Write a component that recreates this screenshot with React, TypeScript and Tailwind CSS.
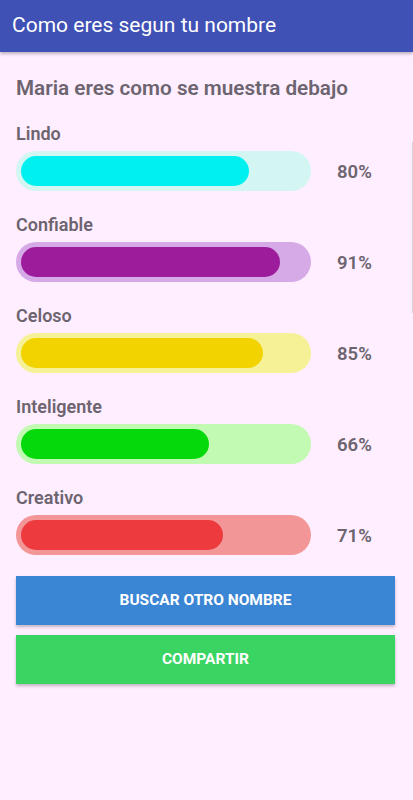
const traits = [
  { name: 'Lindo', value: 80, fill: 228, track: 'bg-[#d3f6f3]', bar: 'bg-[#00f0f0]' },
  { name: 'Confiable', value: 91, fill: 259, track: 'bg-[#d5aae7]', bar: 'bg-[#9c1c9c]' },
  { name: 'Celoso', value: 85, fill: 242, track: 'bg-[#f6f096]', bar: 'bg-[#f2d300]' },
  { name: 'Inteligente', value: 66, fill: 188, track: 'bg-[#c2fab4]', bar: 'bg-[#05d90b]' },
  { name: 'Creativo', value: 71, fill: 202, track: 'bg-[#f39697]', bar: 'bg-[#ed3a3f]' },
];

export default function App() {
  return (
    <div className="relative min-h-[800px] w-full bg-[#ffeeff] font-['Roboto',sans-serif]">
      {/* toolbar */}
      <div className="flex h-[52px] items-center bg-[#3f51b5] px-3 shadow-[0_2px_3px_rgba(0,0,0,0.25)]">
        <h1 className="text-[21px] text-white">Como eres segun tu nombre</h1>
      </div>

      <div className="flex flex-col px-4 pt-6">
        <p className="text-[20.7px] leading-6 font-semibold text-[#6c646f]">Maria eres como se muestra debajo</p>

        <div className="mt-[23px] flex flex-col gap-[23px]">
          {traits.map((t) => (
            <div key={t.name} className="flex flex-col">
              <span className="text-[18px] leading-[22px] font-semibold text-[#6c646f]">{t.name}</span>
              <div className="mt-[6px] flex items-center">
                <div className={`flex h-10 w-[295px] items-center rounded-full px-[5px] ${t.track}`}>
                  <div className={`h-[30px] rounded-full ${t.bar}`} style={{ width: t.fill }} />
                </div>
                <span className="ml-[26px] pt-[3px] text-[18.5px] font-semibold text-[#6c646f]">{t.value}%</span>
              </div>
            </div>
          ))}
        </div>

        <button className="mt-[21px] flex h-[49px] w-[379px] items-center justify-center bg-[#3a85d4] text-[15.5px] font-bold text-white shadow-[0_2px_3px_rgba(0,0,0,0.25)]">
          BUSCAR OTRO NOMBRE
        </button>
        <button className="mt-[10px] flex h-[49px] w-[379px] items-center justify-center bg-[#3ad462] text-[15.5px] font-bold text-white shadow-[0_2px_3px_rgba(0,0,0,0.25)]">
          COMPARTIR
        </button>
      </div>

      {/* edge glow */}
      <div className="absolute top-[142px] right-0 h-[171px] w-px bg-[#d8d0d8]" />
    </div>
  );
}
